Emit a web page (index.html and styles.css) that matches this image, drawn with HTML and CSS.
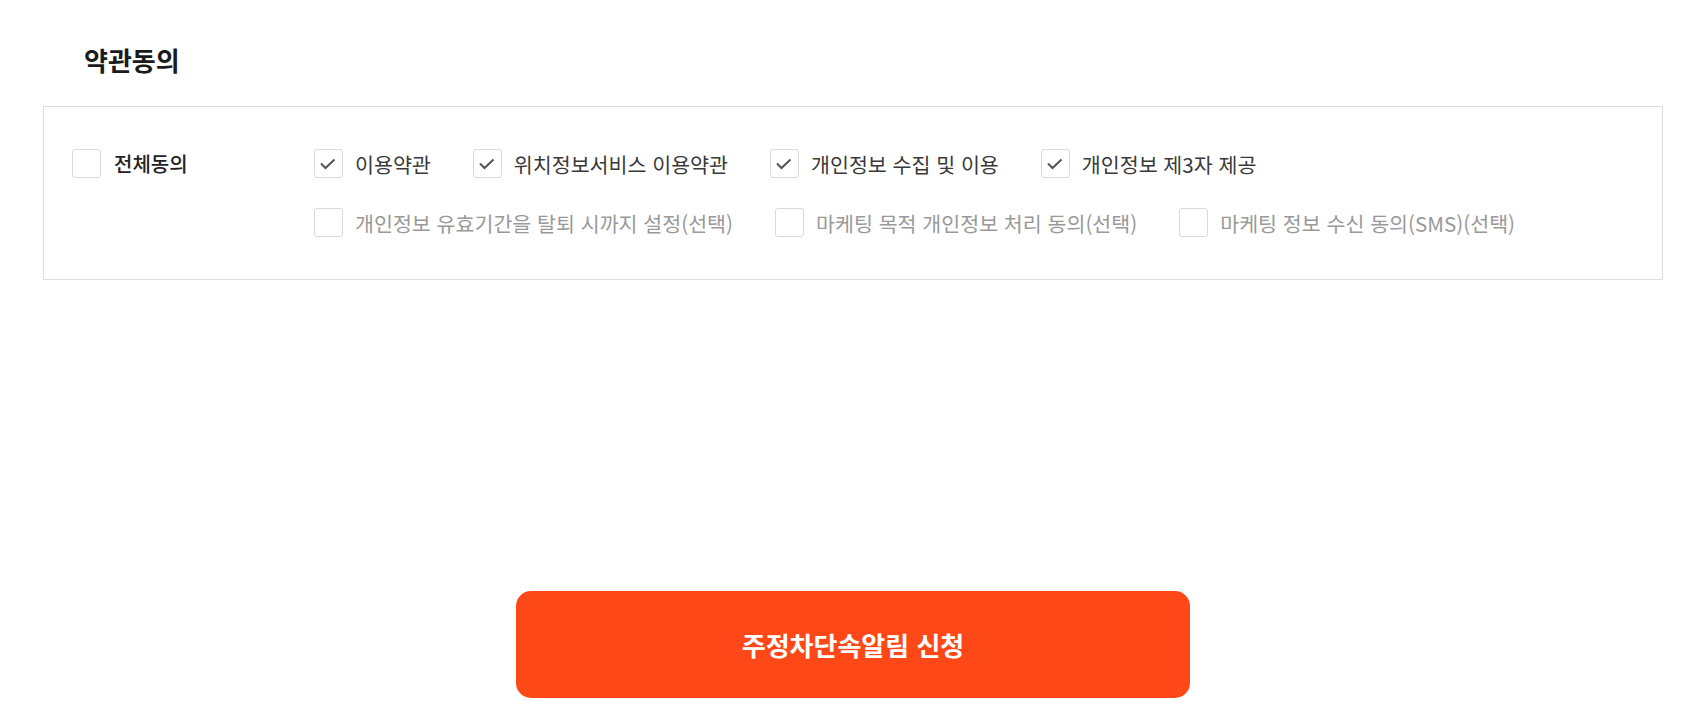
FILE: index.html
```html
<!DOCTYPE html>
<html lang="ko">
<head>
  <meta charset="UTF-8">
  <title>약관동의</title>
  <link rel="stylesheet" href="styles.css">
</head>
<body>
  <div class="wrap">
    <h2 class="title">약관동의</h2>

    <div class="terms">
      <div class="terms-all">
        <label class="chk all"><span class="box"></span>전체동의</label>
      </div>

      <div class="terms-list">
        <div class="row">
          <label class="chk"><span class="box"><svg viewBox="0 0 27 27"><path d="M6 13.5l4.5 4.5 9-8.5"/></svg></span>이용약관</label>
          <label class="chk"><span class="box"><svg viewBox="0 0 27 27"><path d="M6 13.5l4.5 4.5 9-8.5"/></svg></span>위치정보서비스 이용약관</label>
          <label class="chk"><span class="box"><svg viewBox="0 0 27 27"><path d="M6 13.5l4.5 4.5 9-8.5"/></svg></span>개인정보 수집 및 이용</label>
          <label class="chk"><span class="box"><svg viewBox="0 0 27 27"><path d="M6 13.5l4.5 4.5 9-8.5"/></svg></span>개인정보 제3자 제공</label>
        </div>
        <div class="row optional">
          <label class="chk"><span class="box"></span>개인정보 유효기간을 탈퇴 시까지 설정(선택)</label>
          <label class="chk"><span class="box"></span>마케팅 목적 개인정보 처리 동의(선택)</label>
          <label class="chk"><span class="box"></span>마케팅 정보 수신 동의(SMS)(선택)</label>
        </div>
      </div>
    </div>

    <div class="btn-area">
      <button class="submit">주정차단속알림 신청</button>
    </div>
  </div>
</body>
</html>
```

FILE: styles.css
```css
body {
  margin: 0;
  font-family: "Noto Sans CJK KR", "Noto Sans", sans-serif;
  background-color: #fff;
}

.wrap {
  width: 1620px;
  margin-left: 43px;
}

.title {
  margin: 0 0 30px;
  padding: 44px 0 0 41px;
  font-size: 26px;
  line-height: 32px;
  font-weight: 700;
  color: #1b1b1b;
}

.terms {
  display: flex;
  border: 1px solid #ddd;
  padding: 42px 28px 42px;
}

.terms-all {
  width: 242px;
  flex-shrink: 0;
}

.terms-list {
  display: flex;
  flex-direction: column;
  gap: 30px;
}

.row {
  display: flex;
  gap: 42px;
}

.chk {
  display: flex;
  align-items: center;
  gap: 12px;
  height: 29px;
  font-size: 20.6px;
  color: #3a3a3a;
  white-space: nowrap;
}

.chk.all {
  gap: 13px;
  font-size: 20px;
  font-weight: 500;
  color: #222;
}

.optional .chk {
  color: #999;
}

.box {
  width: 27px;
  height: 27px;
  border: 1px solid #d9d9d9;
  border-radius: 3px;
  flex-shrink: 0;
}

.box svg {
  display: block;
  width: 27px;
  height: 27px;
  fill: none;
  stroke: #555;
  stroke-width: 2;
}

.btn-area {
  display: flex;
  justify-content: center;
  margin-top: 311px;
}

.submit {
  width: 674px;
  height: 107px;
  border: 0;
  border-radius: 15px;
  background-color: #ff4817;
  color: #fff;
  font-family: "Noto Sans CJK KR", "Noto Sans", sans-serif;
  font-size: 26px;
  font-weight: 700;
  cursor: pointer;
}
```
